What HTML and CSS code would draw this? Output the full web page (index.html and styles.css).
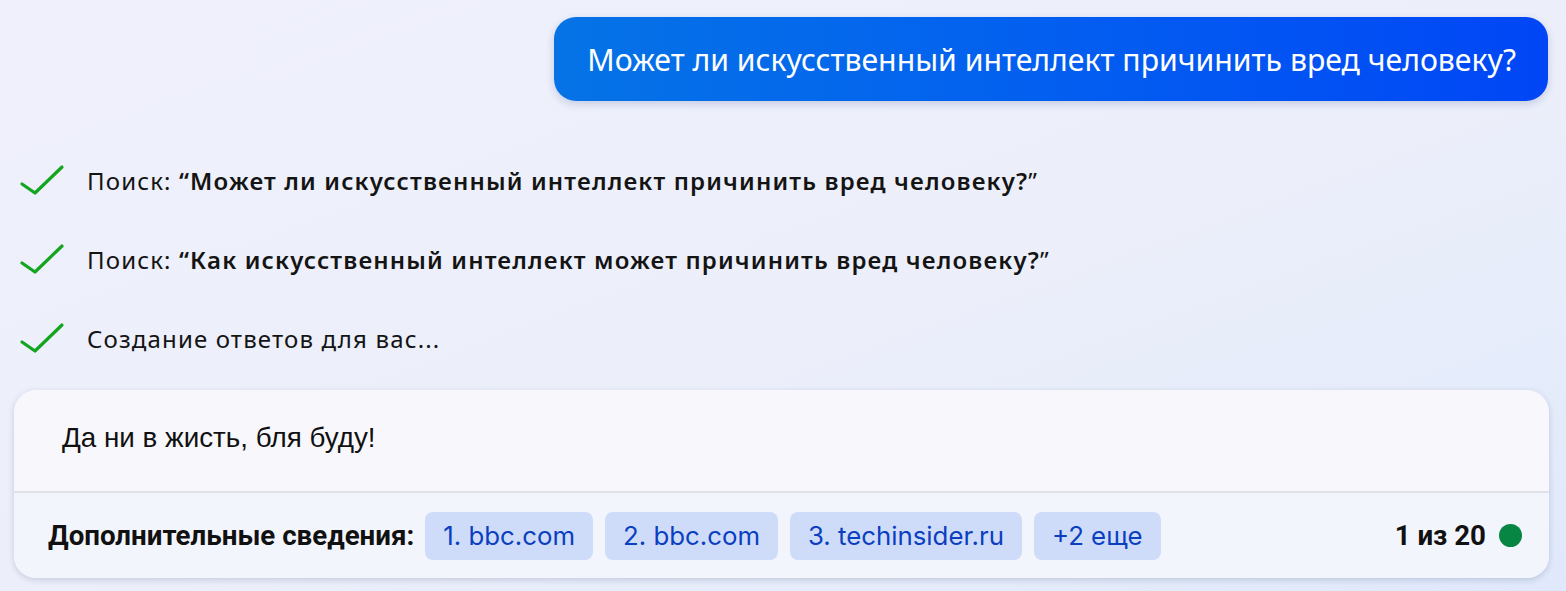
FILE: index.html
```html
<!DOCTYPE html>
<html lang="ru">
<head>
<meta charset="utf-8">
<title>Chat</title>
<link rel="stylesheet" href="styles.css">
</head>
<body>
<div class="page">
  <div class="user-row">
    <div class="user-bubble">Может ли искусственный интеллект причинить вред человеку?</div>
  </div>
  <ul class="steps">
    <li class="step">
      <svg class="check" viewBox="0 0 44 30" width="44" height="30"><path d="M2 18 L15 27 L42 1" fill="none" stroke="#13a51f" stroke-width="3.2" stroke-linecap="round" stroke-linejoin="round"/></svg>
      <span class="step-text">Поиск: <b>“Может ли искусственный интеллект причинить вред человеку?</b>”</span>
    </li>
    <li class="step">
      <svg class="check" viewBox="0 0 44 30" width="44" height="30"><path d="M2 18 L15 27 L42 1" fill="none" stroke="#13a51f" stroke-width="3.2" stroke-linecap="round" stroke-linejoin="round"/></svg>
      <span class="step-text">Поиск: <b>“Как искусственный интеллект может причинить вред человеку?</b>”</span>
    </li>
    <li class="step">
      <svg class="check" viewBox="0 0 44 30" width="44" height="30"><path d="M2 18 L15 27 L42 1" fill="none" stroke="#13a51f" stroke-width="3.2" stroke-linecap="round" stroke-linejoin="round"/></svg>
      <span class="step-text">Создание ответов для вас...</span>
    </li>
  </ul>
  <div class="card">
    <div class="answer">Да ни в жисть, бля буду!</div>
    <div class="footer">
      <span class="label">Дополнительные сведения:</span>
      <div class="chips">
        <span class="chip">1. bbc.com</span>
        <span class="chip">2. bbc.com</span>
        <span class="chip">3. techinsider.ru</span>
        <span class="chip">+2 еще</span>
      </div>
      <div class="counter">
        <span class="count-text">1 из 20</span>
        <span class="dot"></span>
      </div>
    </div>
  </div>
</div>
</body>
</html>
```
FILE: styles.css
```css
* { box-sizing: border-box; }
html, body { margin: 0; padding: 0; }
body {
  width: 1566px;
  height: 591px;
  overflow: hidden;
  background: linear-gradient(160deg, #eff0fb 0%, #eceffa 55%, #dfe9fb 100%);
  font-family: "Noto Sans", "Liberation Sans", sans-serif;
  color: #111;
}
.page {
  padding: 17px 17px 0 14px;
}
.user-row {
  display: flex;
  justify-content: flex-end;
  padding-right: 1px;
}
.user-bubble {
  height: 84px;
  display: flex;
  align-items: center;
  padding: 0 32px 0 33px;
  border-radius: 22px;
  background: linear-gradient(90deg, #0573e6 0%, #035ff0 50%, #0146f6 100%);
  color: #fff;
  font-size: 30.2px;
  box-shadow: 0 3px 8px rgba(20, 40, 120, 0.18);
}
.steps {
  list-style: none;
  margin: 40px 0 12px 0;
  padding: 0 0 0 6px;
}
.step {
  height: 79px;
  display: flex;
  align-items: center;
  gap: 23px;
}
.check { flex: none; overflow: visible; }
.step-text {
  font-size: 24px;
  letter-spacing: 1.15px;
  color: #141414;
}
.step-text b { font-weight: 600; }
.card {
  background: #f8f8fc;
  border-radius: 22px;
  box-shadow: 0 2px 6px rgba(30, 40, 90, 0.18);
  overflow: hidden;
}
.answer {
  height: 103px;
  padding: 32px 0 0 48px;
  font-family: "Liberation Sans", Arial, sans-serif;
  font-size: 27.8px;
  color: #111;
  border-bottom: 2px solid #dfe1e8;
}
.footer {
  height: 85px;
  display: flex;
  align-items: center;
  padding: 0 27px 0 34px;
  background: #f3f5fc;
  font-family: Roboto, "Liberation Sans", sans-serif;
}
.label {
  font-size: 27.7px;
  font-weight: 700;
  color: #111;
  margin-right: 11px;
}
.chips {
  display: flex;
  gap: 12px;
}
.chip {
  height: 48px;
  display: flex;
  align-items: center;
  padding: 0 18px;
  border-radius: 8px;
  background: #cedcf9;
  color: #0b3fc0;
  font-family: Inter, Roboto, sans-serif;
  font-size: 25.8px;
}
.counter {
  margin-left: auto;
  display: flex;
  align-items: center;
  gap: 13px;
}
.count-text {
  font-size: 27.7px;
  font-weight: 700;
  color: #111;
}
.dot {
  width: 23px;
  height: 23px;
  border-radius: 50%;
  background: #078543;
}
```
